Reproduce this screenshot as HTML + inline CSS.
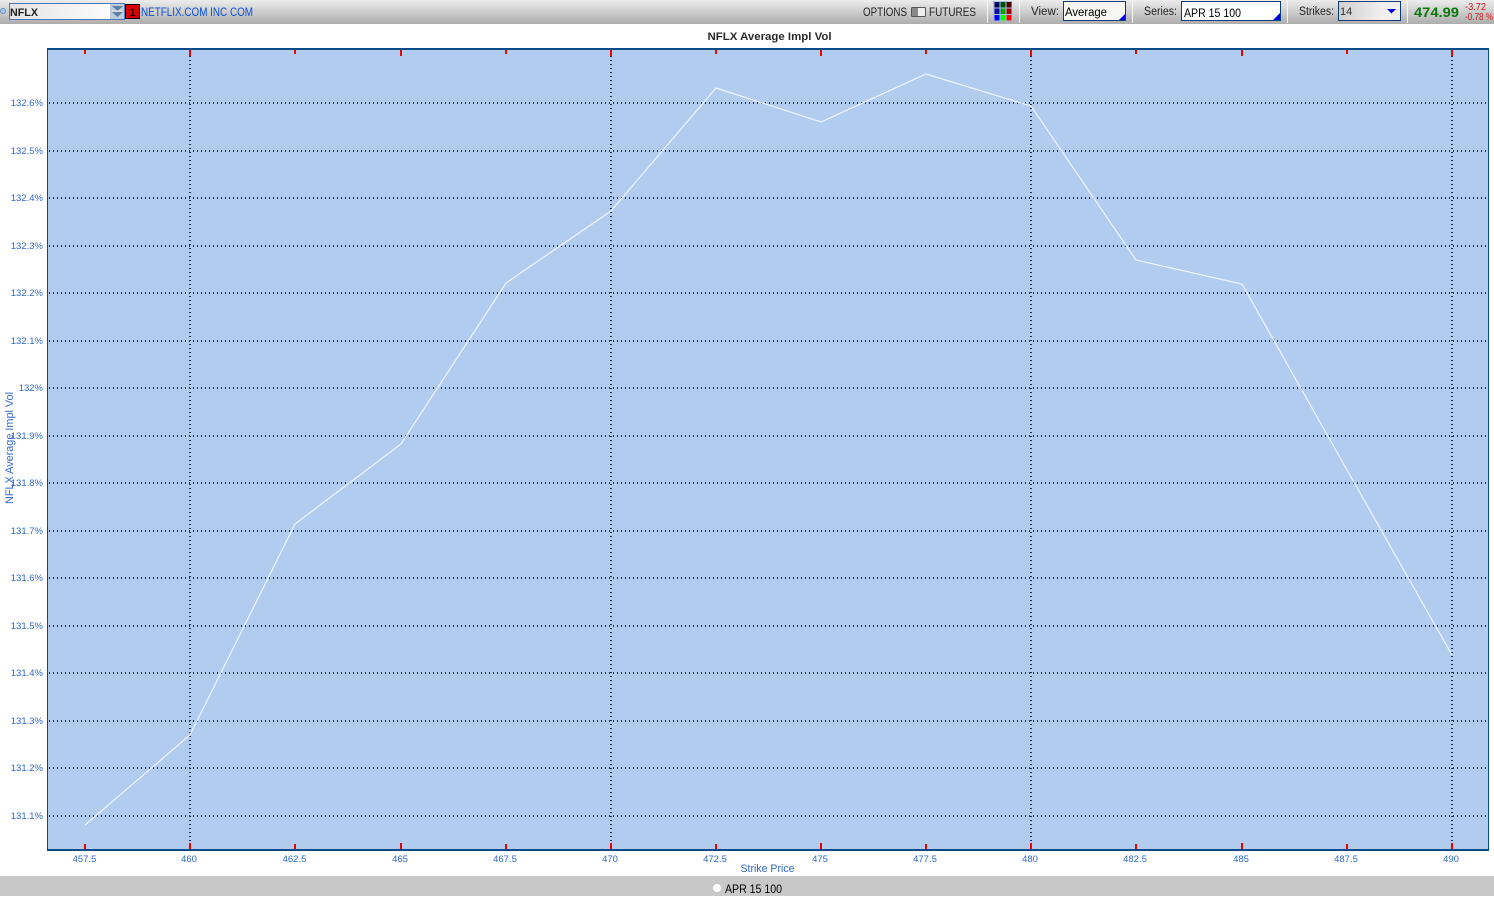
<!DOCTYPE html>
<html><head><meta charset="utf-8"><title>NFLX Average Impl Vol</title>
<style>
html,body{margin:0;padding:0;background:#fff;width:1494px;height:897px;overflow:hidden}
svg{display:block;font-family:"Liberation Sans",sans-serif}
.y{font-size:9.5px;fill:#2f68c8;text-anchor:end}
.x{font-size:9.5px;fill:#2f68c8;text-anchor:middle}
.t{font-size:11.5px;fill:#222}
.b{font-size:11.5px;fill:#000}
</style></head><body>
<svg width="1494" height="897" viewBox="0 0 1494 897" xmlns="http://www.w3.org/2000/svg">
<defs>
<linearGradient id="g" x1="0" y1="0" x2="0" y2="1"><stop offset="0" stop-color="#ececec"/><stop offset="1" stop-color="#adadad"/></linearGradient>
<linearGradient id="f" x1="0" y1="0" x2="1" y2="0"><stop offset="0" stop-color="#e4e4e4"/><stop offset="1" stop-color="#fff"/></linearGradient>
<linearGradient id="s" x1="0" y1="0" x2="1" y2="0"><stop offset="0" stop-color="#cfcfcf"/><stop offset="0.7" stop-color="#f0f0f0"/><stop offset="1" stop-color="#f0f0f0"/></linearGradient>
</defs>
<!-- toolbar -->
<rect x="0" y="0" width="1494" height="24" fill="url(#g)"/>
<circle cx="3" cy="11" r="2.5" fill="#a8c8f0" stroke="#6a90c8" stroke-width="1"/>
<rect x="9.5" y="3.5" width="115" height="16" fill="url(#f)" stroke="#5078b4"/>
<rect x="110" y="4" width="14" height="15" fill="#bccbe0"/>
<path d="M112 6h11l-5.500 5z" fill="#5f7f9f"/><path d="M112 12h11l-5.500 5z" fill="#5f7f9f"/><rect x="112" y="10.500" width="11" height="1" fill="#eee"/>
<text x="10" y="16" font-size="11" font-weight="bold" fill="#222" textLength="28" lengthAdjust="spacingAndGlyphs">NFLX</text>
<rect x="125.500" y="4.500" width="14" height="14" fill="#d80000" stroke="#000"/>
<text x="132.500" y="16" font-size="11" fill="#000" text-anchor="middle">1</text>
<text x="141" y="16" font-size="11.500" fill="#0a50d8" textLength="112" lengthAdjust="spacingAndGlyphs">NETFLIX.COM INC COM</text>

<text x="863" y="16" class="t" textLength="44" lengthAdjust="spacingAndGlyphs">OPTIONS</text>
<rect x="911.500" y="7.500" width="14" height="9" rx="1" fill="#eee" stroke="#555"/>
<rect x="912" y="8" width="6" height="8" fill="#888"/>
<text x="929" y="16" class="t" textLength="47" lengthAdjust="spacingAndGlyphs">FUTURES</text>
<rect x="987" y="0" width="1" height="23" fill="#f4f4f4"/>
<rect x="1019" y="0" width="1" height="23" fill="#f4f4f4"/>
<rect x="993" y="1" width="19" height="20" fill="#a8c0e8"/>
<rect x="994.500" y="2" width="5" height="5.500" fill="#000060"/><rect x="1000.500" y="2" width="5" height="5.500" fill="#005000"/><rect x="1006.500" y="2" width="5" height="5.500" fill="#500000"/>
<rect x="994.500" y="8.500" width="5" height="5.500" fill="#0000a8"/><rect x="1000.500" y="8.500" width="5" height="5.500" fill="#00a000"/><rect x="1006.500" y="8.500" width="5" height="5.500" fill="#a00000"/>
<rect x="994.500" y="15" width="5" height="5.500" fill="#0000ff"/><rect x="1000.500" y="15" width="5" height="5.500" fill="#00ff00"/><rect x="1006.500" y="15" width="5" height="5.500" fill="#ff0000"/>

<text x="1031" y="15" class="t" textLength="28" lengthAdjust="spacingAndGlyphs">View:</text>
<rect x="1063.500" y="1.500" width="62" height="19" fill="#f6f6f2" stroke="#0a3c78"/>
<path d="M1125 14v6h-6z" fill="#0000e0"/>
<text x="1065" y="16" class="b" textLength="42" lengthAdjust="spacingAndGlyphs">Average</text>
<rect x="1132" y="0" width="1" height="23" fill="#f4f4f4"/>
<text x="1144" y="15" class="t" textLength="33" lengthAdjust="spacingAndGlyphs">Series:</text>
<rect x="1181.500" y="1.500" width="99" height="19" fill="#fff" stroke="#0a3c78"/>
<path d="M1280 13v7h-7z" fill="#0000e0"/>
<text x="1184" y="17" class="b" textLength="57" lengthAdjust="spacingAndGlyphs">APR 15 100</text>
<rect x="1287" y="0" width="1" height="23" fill="#f4f4f4"/>
<text x="1299" y="15" class="t" textLength="35" lengthAdjust="spacingAndGlyphs">Strikes:</text>
<rect x="1338.500" y="1.500" width="62" height="19" fill="url(#s)" stroke="#0a3c78"/>
<path d="M1387 9h9l-4.500 4.500z" fill="#0000e0"/>
<text x="1340" y="15" font-size="11" fill="#333">14</text>
<rect x="1407" y="0" width="1" height="23" fill="#f4f4f4"/>
<text x="1414" y="17" font-size="14" font-weight="bold" fill="#0a780a" textLength="45" lengthAdjust="spacingAndGlyphs">474.99</text>
<text x="1465" y="10" font-size="10" fill="#d01818" textLength="21" lengthAdjust="spacingAndGlyphs">-3.72</text>
<text x="1465" y="20" font-size="10" fill="#d01818" textLength="28" lengthAdjust="spacingAndGlyphs">-0.78 %</text>

<!-- title -->
<text x="769.500" y="40" font-size="11" font-weight="bold" fill="#2a2a2a" text-anchor="middle" textLength="124" lengthAdjust="spacingAndGlyphs">NFLX Average Impl Vol</text>

<!-- plot -->
<rect x="47" y="48" width="1442" height="803" fill="#b2ccf0"/>
<g stroke="#1c2c60" stroke-width="2" stroke-dasharray="1 3" fill="none">
<path d="M49 103H1488M49 151H1488M49 198H1488M49 246H1488M49 293H1488M49 341H1488M49 388H1488M49 436H1488M49 483H1488M49 531H1488M49 578H1488M49 626H1488M49 673H1488M49 721H1488M49 768H1488M49 816H1488"/>
<path d="M190 56V843M611 56V843M1031 56V843M1452 56V843"/>
</g>
<polyline points="85,825 190,735 295,524 401,444 506,283 611,211 716,88 821,122 926,74 1031,106 1136,260 1242,284 1347,470 1452,655" fill="none" stroke="#f0f5ff" stroke-width="1.200"/>
<rect x="47" y="48" width="1442" height="2" fill="#0a4a86"/>
<rect x="47" y="849" width="1442" height="2" fill="#0a4a86"/>
<rect x="47" y="48" width="1" height="803" fill="#0a4a86"/>
<rect x="1488" y="48" width="1" height="803" fill="#0a4a86"/>
<g fill="#f00000">
<rect x="84" y="50" width="2" height="4"/><rect x="189" y="50" width="2" height="6"/><rect x="294" y="50" width="2" height="4"/><rect x="400" y="50" width="2" height="6"/><rect x="505" y="50" width="2" height="4"/><rect x="610" y="50" width="2" height="6"/><rect x="715" y="50" width="2" height="4"/><rect x="820" y="50" width="2" height="6"/><rect x="925" y="50" width="2" height="4"/><rect x="1030" y="50" width="2" height="6"/><rect x="1135" y="50" width="2" height="4"/><rect x="1241" y="50" width="2" height="6"/><rect x="1346" y="50" width="2" height="4"/><rect x="1451" y="50" width="2" height="6"/>
<rect x="84" y="844" width="2" height="5"/><rect x="189" y="843" width="2" height="6"/><rect x="294" y="844" width="2" height="5"/><rect x="400" y="843" width="2" height="6"/><rect x="505" y="844" width="2" height="5"/><rect x="610" y="843" width="2" height="6"/><rect x="715" y="844" width="2" height="5"/><rect x="820" y="843" width="2" height="6"/><rect x="925" y="844" width="2" height="5"/><rect x="1030" y="843" width="2" height="6"/><rect x="1135" y="844" width="2" height="5"/><rect x="1241" y="843" width="2" height="6"/><rect x="1346" y="844" width="2" height="5"/><rect x="1451" y="843" width="2" height="6"/>
</g>

<!-- y labels -->
<text class="y" x="43" y="106">132.6%</text>
<text class="y" x="43" y="154">132.5%</text>
<text class="y" x="43" y="201">132.4%</text>
<text class="y" x="43" y="249">132.3%</text>
<text class="y" x="43" y="296">132.2%</text>
<text class="y" x="43" y="344">132.1%</text>
<text class="y" x="43" y="391">132%</text>
<text class="y" x="43" y="439">131.9%</text>
<text class="y" x="43" y="486">131.8%</text>
<text class="y" x="43" y="534">131.7%</text>
<text class="y" x="43" y="581">131.6%</text>
<text class="y" x="43" y="629">131.5%</text>
<text class="y" x="43" y="676">131.4%</text>
<text class="y" x="43" y="724">131.3%</text>
<text class="y" x="43" y="771">131.2%</text>
<text class="y" x="43" y="819">131.1%</text>
<text x="13" y="504" font-size="11" fill="#2f68c8" transform="rotate(-90 13 504)" textLength="112" lengthAdjust="spacingAndGlyphs">NFLX Average Impl Vol</text>

<!-- x labels -->
<text class="x" x="84.500" y="862">457.5</text>
<text class="x" x="189" y="862">460</text>
<text class="x" x="294.500" y="862">462.5</text>
<text class="x" x="400" y="862">465</text>
<text class="x" x="505" y="862">467.5</text>
<text class="x" x="610" y="862">470</text>
<text class="x" x="715" y="862">472.5</text>
<text class="x" x="820" y="862">475</text>
<text class="x" x="925" y="862">477.5</text>
<text class="x" x="1030" y="862">480</text>
<text class="x" x="1135" y="862">482.5</text>
<text class="x" x="1241" y="862">485</text>
<text class="x" x="1346" y="862">487.5</text>
<text class="x" x="1451" y="862">490</text>
<text x="767.500" y="872" font-size="11" fill="#2f68c8" text-anchor="middle" textLength="54" lengthAdjust="spacingAndGlyphs">Strike Price</text>

<!-- legend -->
<rect x="0" y="876" width="1494" height="20" fill="#c8c8c8"/>
<circle cx="717" cy="888" r="4" fill="#fff"/>
<text x="725" y="893" class="b" textLength="57" lengthAdjust="spacingAndGlyphs">APR 15 100</text>
</svg>
</body></html>
